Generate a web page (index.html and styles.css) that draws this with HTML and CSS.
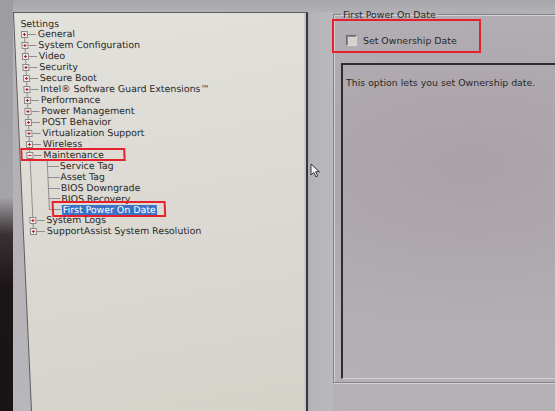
FILE: index.html
```html
<!DOCTYPE html>
<html lang="en">

<head>
    <meta charset="UTF-8">
    <title>BIOS Setup - First Power On Date</title>
    <link rel="stylesheet" href="styles.css">
</head>

<body>
    <div class="screen">
        <div class="bezel"></div>
        <div class="tree-frame">
            <div class="tree-pane">
                <div class="tree">
                    <div class="root">Settings</div>
                    <div class="branch">
                        <div class="node"><span class="exp"></span><span class="dash"></span><span>General</span></div>
                        <div class="node"><span class="exp"></span><span class="dash"></span><span>System Configuration</span></div>
                        <div class="node"><span class="exp"></span><span class="dash"></span><span>Video</span></div>
                        <div class="node"><span class="exp"></span><span class="dash"></span><span>Security</span></div>
                        <div class="node"><span class="exp"></span><span class="dash"></span><span>Secure Boot</span></div>
                        <div class="node"><span class="exp"></span><span class="dash"></span><span>Intel&reg; Software Guard Extensions&trade;</span></div>
                        <div class="node"><span class="exp"></span><span class="dash"></span><span>Performance</span></div>
                        <div class="node"><span class="exp"></span><span class="dash"></span><span>Power Management</span></div>
                        <div class="node"><span class="exp"></span><span class="dash"></span><span>POST Behavior</span></div>
                        <div class="node"><span class="exp"></span><span class="dash"></span><span>Virtualization Support</span></div>
                        <div class="node"><span class="exp"></span><span class="dash"></span><span>Wireless</span></div>
                        <div class="node open mark"><span class="exp minus"></span><span class="dash"></span><span>Maintenance</span></div>
                        <div class="children">
                            <div class="leaf"><span class="dash long"></span><span>Service Tag</span></div>
                            <div class="leaf"><span class="dash long"></span><span>Asset Tag</span></div>
                            <div class="leaf"><span class="dash long"></span><span>BIOS Downgrade</span></div>
                            <div class="leaf"><span class="dash long"></span><span>BIOS Recovery</span></div>
                            <div class="leaf mark"><span class="dash long"></span><span class="sel">First Power On Date</span></div>
                        </div>
                        <div class="node"><span class="exp"></span><span class="dash"></span><span>System Logs</span></div>
                        <div class="node"><span class="exp"></span><span class="dash"></span><span>SupportAssist System Resolution</span></div>
                    </div>
                </div>
            </div>
        </div>
        <div class="gutter">
            <svg class="cursor" width="11" height="15" viewBox="0 0 11 15">
                <path d="M1 1 L1 12 L3.8 9.4 L5.8 13.8 L7.6 13 L5.7 8.7 L9.4 8.7 Z" fill="#f4f4f4" stroke="#222" stroke-width="0.9" stroke-linejoin="round"/>
            </svg>
        </div>
        <div class="details">
            <fieldset class="group">
                <legend>First Power On Date</legend>
                <div class="option mark"><span class="check"></span>Set Ownership Date</div>
                <div class="help">This option lets you set Ownership date.</div>
            </fieldset>
        </div>
    </div>
</body>

</html>
```

FILE: styles.css
```css
html, body {
    margin: 0;
    width: 555px;
    height: 411px;
    overflow: hidden;
}
body {
    background: radial-gradient(ellipse at 85% 40%, #a9a1a7 0%, #b2aeb3 45%, #b8b7bb 100%);
    font-family: "DejaVu Sans", Verdana, sans-serif;
    font-size: 9.4px;
    color: #2b2927;
}
.screen {
    display: flex;
    height: 411px;
    background: linear-gradient(#a7a6aa 0, #b1b0b4 12px, transparent 12px);
}
.bezel {
    width: 13px;
    flex: none;
    background: linear-gradient(#9d9ca1 0%, #a5a4a8 48%, #3a3133 57%, #1c1516 70%, #191313 100%);
}

/* left tree */
.tree-frame {
    width: 295px;
    flex: none;
    margin-top: 12px;
    padding: 1px 0 0 1px;
    box-sizing: border-box;
    background: #5d5b60;
    clip-path: polygon(0 0, 100% 0, 100% 100%, 18px 100%);
}
.tree-pane {
    height: 100%;
    box-sizing: border-box;
    border-right: 2px solid #36343a;
    box-shadow: inset -2px 0 0 #c9c7c9;
    background: linear-gradient(170deg, #e3e1dc 0%, #dcdad3 45%, #d4d3ca 100%);
    clip-path: polygon(0 0, 100% 0, 100% 100%, 18px 100%);
}
.tree {
    padding: 5.5px 0 0 6px;
    transform: skewX(2.6deg);
    transform-origin: 0 0;
}
.root, .node, .leaf {
    height: 10.95px;
    line-height: 10.95px;
    white-space: nowrap;
}
.node, .leaf {
    display: flex;
    align-items: center;
    position: relative;
}
.branch {
    background: linear-gradient(#8f8d90, #8f8d90) no-repeat 3px 5px / 1px 197px;
}
.children {
    background: linear-gradient(#8f8d90, #8f8d90) no-repeat 20px 0 / 1px 49px;
}
.exp {
    width: 7px;
    height: 7px;
    flex: none;
    box-sizing: border-box;
    border: 1px solid #8c878b;
    background: #efe9e6;
    position: relative;
}
.exp::before, .exp::after {
    content: "";
    position: absolute;
    background: #b3252f;
}
.exp::before {
    left: 1px;
    top: 2px;
    width: 3px;
    height: 1px;
}
.exp::after {
    left: 2px;
    top: 1px;
    width: 1px;
    height: 3px;
}
.exp.minus::after {
    display: none;
}
.dash {
    width: 8px;
    flex: none;
    border-top: 1px solid #8f8d90;
    margin-right: 2px;
}
.leaf {
    padding-left: 20px;
}
.dash.long {
    width: 12px;
    margin-right: 1px;
}
.sel {
    background: #3a73c6;
    color: #fff;
    line-height: 9.5px;
    padding: 0 1px;
}
.mark::after {
    content: "";
    position: absolute;
    box-sizing: border-box;
    border: 2px solid #e5222c;
}
.node.mark::after {
    left: -6px;
    top: -1.5px;
    width: 105px;
    height: 13px;
}
.leaf.mark::after {
    left: 23px;
    top: -3.5px;
    width: 114px;
    height: 16px;
}

/* middle strip */
.gutter {
    width: 25px;
    flex: none;
    position: relative;
    background: linear-gradient(90deg, #aeadb1 0, #b5b4b8 3px, #b9b8bc 100%);
    margin-top: 12px;
}
.cursor {
    position: absolute;
    left: 2px;
    top: 151px;
}

/* right details */
.details {
    flex: 1;
    padding-top: 9px;
    min-width: 0;
}
.group {
    margin: 0;
    width: 240px;
    height: 374px;
    padding: 0 0 4px 7px;
    border: 1px solid #858388;
    box-shadow: inset 1px 1px 0 #d3d1d5, 1px 1px 0 #d3d1d5;
    box-sizing: border-box;
}
.group legend {
    padding: 0 2px;
    line-height: 11px;
}
.option {
    position: relative;
    display: flex;
    align-items: center;
    height: 11px;
    margin-top: 15px;
    padding-left: 5px;
}
.check {
    width: 11px;
    height: 11px;
    box-sizing: border-box;
    border: 1px solid #6b696e;
    border-right-color: #d8d6d8;
    border-bottom-color: #d8d6d8;
    background: #d6d3cd;
    box-shadow: inset 1px 1px 0 #8d8b8e;
    margin-right: 6px;
}
.option.mark::after {
    left: -9px;
    top: -16px;
    width: 149px;
    height: 34px;
}
.help {
    margin-top: 17px;
    height: 316px;
    box-sizing: border-box;
    border-top: 2px solid #2f2d32;
    border-left: 2px solid #2f2d32;
    border-bottom: 1px solid #d0ced2;
    padding: 12px 0 0 3px;
    line-height: 11px;
    color: #2a282b;
}
```
